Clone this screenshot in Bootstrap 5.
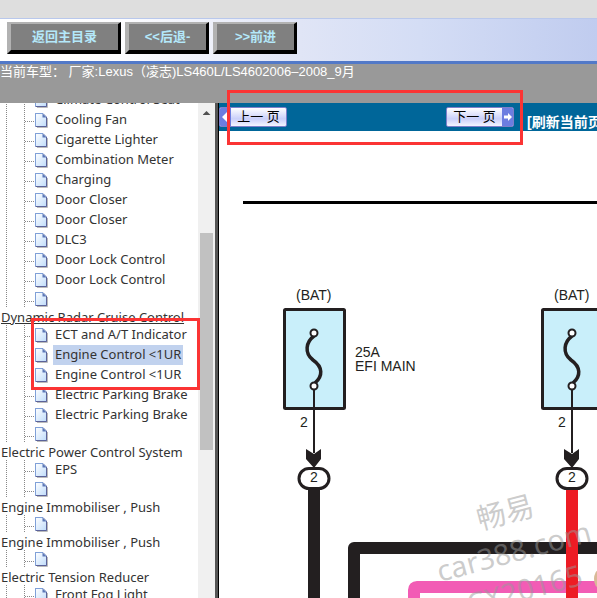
<!DOCTYPE html>
<html lang="zh-CN">
<head>
<meta charset="utf-8">
<meta name="viewport" content="width=device-width, initial-scale=1">
<title>Lexus LS460L/LS460</title>
<link href="https://cdn.jsdelivr.net/npm/bootstrap@5.3.0/dist/css/bootstrap.min.css" rel="stylesheet">
<style>
body{font-family:"Liberation Sans","Noto Sans CJK SC",sans-serif;font-size:13px;line-height:16px;color:#333}
.strip{height:18px;background:#dedede}
.toolbar{height:46px;padding:3px 7px 0;border-top:1px solid #b9c8ec;border-bottom:3px solid #5279c8;background:linear-gradient(90deg,#fff 0,#fdfdff 120px,#e0e5f6 300px,#d4ddf5 420px,#c0ccef 597px)}
.tool-btn{height:32px;width:84px;padding:0;background:#808080;border:solid;border-width:2px 3px 4px 4px;border-color:#b2b2b2 #000 #000 #b2b2b2;color:#b4e8fa;font-weight:700;font-size:13px;line-height:16px;white-space:nowrap}
.tool-btn.wide{width:114px}
.model-bar{height:39px;background:#999;color:#fff}
.side{width:219px;border-right:1px solid #000}
.side-edge{width:3px;background:#555}
.tree{font-family:"Noto Sans","Noto Sans CJK SC",sans-serif;font-size:13px;margin:-13px 0 0;padding:0}
.tree a{color:inherit;text-decoration:none;white-space:nowrap}
.leaf{height:20px;padding-left:35px;background:
 repeating-linear-gradient(180deg,#888 0 1px,transparent 1px 2px) 6px 0/1px 100% no-repeat,
 repeating-linear-gradient(180deg,#888 0 1px,transparent 1px 2px) 24px 0/1px 100% no-repeat,
 repeating-linear-gradient(90deg,#888 0 1px,transparent 1px 2px) 25px 11px/10px 1px no-repeat}
.leaf.blank{height:18px}
.leaf svg{width:13px;height:15px;margin-top:3px;flex:none}
.leaf.blank svg{margin-top:2px}
.leaf a{margin-left:5px;padding:0 2px;line-height:18px}
.leaf a.current{background:#c1d2ee}
.branch{height:17px;line-height:18px;padding-left:1px}
.branch a.hovered{text-decoration:underline}
.scroll{width:17px;background:#f0f0f0}
.thumb{width:13px;height:217px;margin-top:118px;background:#c1c1c1}
.arrow{width:8px;height:4px;margin-top:8px;background:#505050;clip-path:polygon(50% 0,100% 100%,0 100%)}
.pager{height:28px;background:#069}
.page-btn{width:68px;height:20px;padding:0;border:1px solid #7d7fc9;border-radius:2px;background:linear-gradient(#fff,#c9cffa 60%,#f4f5ff);color:#000;font-size:13px;line-height:18px;white-space:nowrap;overflow:hidden}
.page-btn svg{width:11px;height:18px;background:#6c7de0;flex:none}
.page-btn span{flex:1}
.next-btn{margin-left:159px}
.refresh{color:#fff;font-weight:700;font-size:14px;text-decoration:none;margin-left:13px;padding-top:7px;white-space:nowrap}
.callout{border:3px solid #fb3434;pointer-events:none}
.c-pager{left:227px;top:90px;width:296px;height:55px}
.c-tree{left:31px;top:318px;width:169px;height:72px}
.wiring text{font-family:"Liberation Sans",sans-serif;font-size:14px;fill:#231f20}
.wiring .wm text{font-family:"Noto Sans","Noto Sans CJK SC",sans-serif;font-size:29px;fill:#999;fill-opacity:.5}
</style>
<script src="https://cdn.jsdelivr.net/npm/bootstrap@5.3.0/dist/js/bootstrap.bundle.min.js"></script>
</head>
<body class="vh-100 d-flex flex-column overflow-hidden position-relative bg-white">
<svg class="position-absolute" width="0" height="0" aria-hidden="true">
 <defs>
  <linearGradient id="paper" x1="0" y1="0" x2="1" y2="1"><stop offset="0" stop-color="#fff"/><stop offset="1" stop-color="#bfdcfb"/></linearGradient>
 </defs>
 <symbol id="page" viewBox="0 0 13 15">
  <path d="M2 14.500h10.500V5" fill="none" stroke="#bbb"/>
  <path d="M.5 .5h7.500l3.500 3.500v9.500H.5z" fill="url(#paper)" stroke="#7585b8"/>
  <path d="M.5 13V.5H8" fill="none" stroke="#7fa0d8"/>
  <path d="M11.500 4v9.500H1" fill="none" stroke="#5b639a"/>
  <path d="M7.500 .5v4h4z" fill="#5d79b8"/>
 </symbol>
</svg>

<div class="strip flex-shrink-0"></div>
<header class="toolbar d-flex gap-1 flex-shrink-0">
 <button type="button" class="tool-btn wide">返回主目录</button>
 <button type="button" class="tool-btn">&lt;&lt;后退-</button>
 <button type="button" class="tool-btn">&gt;&gt;前进</button>
</header>
<div class="model-bar flex-shrink-0 text-nowrap">当前车型： 厂家:Lexus（凌志)LS460L/LS4602006–2008_9月</div>

<main class="d-flex flex-grow-1 overflow-hidden">
 <nav class="side d-flex flex-shrink-0 overflow-hidden" aria-label="目录">
  <ul class="tree list-unstyled flex-grow-1">
   <li class="leaf d-flex"><svg><use href="#page"/></svg><a href="#">Climate Control Seat</a></li>
   <li class="leaf d-flex"><svg><use href="#page"/></svg><a href="#">Cooling Fan</a></li>
   <li class="leaf d-flex"><svg><use href="#page"/></svg><a href="#">Cigarette Lighter</a></li>
   <li class="leaf d-flex"><svg><use href="#page"/></svg><a href="#">Combination Meter</a></li>
   <li class="leaf d-flex"><svg><use href="#page"/></svg><a href="#">Charging</a></li>
   <li class="leaf d-flex"><svg><use href="#page"/></svg><a href="#">Door Closer</a></li>
   <li class="leaf d-flex"><svg><use href="#page"/></svg><a href="#">Door Closer</a></li>
   <li class="leaf d-flex"><svg><use href="#page"/></svg><a href="#">DLC3</a></li>
   <li class="leaf d-flex"><svg><use href="#page"/></svg><a href="#">Door Lock Control</a></li>
   <li class="leaf d-flex"><svg><use href="#page"/></svg><a href="#">Door Lock Control</a></li>
   <li class="leaf blank d-flex"><svg><use href="#page"/></svg></li>
   <li class="branch"><a href="#" class="hovered">Dynamic Radar Cruise Control</a></li>
   <li class="leaf d-flex"><svg><use href="#page"/></svg><a href="#">ECT and A/T Indicator</a></li>
   <li class="leaf d-flex"><svg><use href="#page"/></svg><a href="#" class="current">Engine Control &lt;1UR</a></li>
   <li class="leaf d-flex"><svg><use href="#page"/></svg><a href="#">Engine Control &lt;1UR</a></li>
   <li class="leaf d-flex"><svg><use href="#page"/></svg><a href="#">Electric Parking Brake</a></li>
   <li class="leaf d-flex"><svg><use href="#page"/></svg><a href="#">Electric Parking Brake</a></li>
   <li class="leaf blank d-flex"><svg><use href="#page"/></svg></li>
   <li class="branch"><a href="#">Electric Power Control System</a></li>
   <li class="leaf d-flex"><svg><use href="#page"/></svg><a href="#">EPS</a></li>
   <li class="leaf blank d-flex"><svg><use href="#page"/></svg></li>
   <li class="branch"><a href="#">Engine Immobiliser , Push</a></li>
   <li class="leaf blank d-flex"><svg><use href="#page"/></svg></li>
   <li class="branch"><a href="#">Engine Immobiliser , Push</a></li>
   <li class="leaf blank d-flex"><svg><use href="#page"/></svg></li>
   <li class="branch"><a href="#">Electric Tension Reducer</a></li>
   <li class="leaf d-flex"><svg><use href="#page"/></svg><a href="#">Front Fog Light</a></li>
  </ul>
  <div class="scroll flex-shrink-0 d-flex flex-column align-items-center"><div class="arrow"></div><div class="thumb"></div></div>
  <div class="side-edge flex-shrink-0"></div>
 </nav>

 <section class="flex-grow-1 d-flex flex-column overflow-hidden">
  <div class="pager d-flex flex-shrink-0 pt-1">
   <button type="button" class="page-btn flex-shrink-0 d-flex"><svg viewBox="0 0 11 18"><path d="M2 9l5-5v3h2v4H7v3z" fill="#fff"/></svg><span>上一 页</span></button>
   <button type="button" class="page-btn next-btn flex-shrink-0 d-flex"><span>下一 页</span><svg viewBox="0 0 11 18"><path d="M10 9L6 5v2.500H2v3h4V13z" fill="#fff"/></svg></button>
   <a href="#" class="refresh">[刷新当前页]</a>
  </div>
  <svg class="wiring flex-grow-1 w-100" role="img" aria-label="EFI MAIN">
   <defs>
    <g id="fuse">
     <rect x="-29.500" y="178.500" width="60" height="99" rx="1" fill="#c9effa" stroke="#231f20" stroke-width="3"/>
     <path d="M0 205C-8 211-10 222-1 229C9 236 9 245 1 252" fill="none" stroke="#231f20" stroke-width="3.500"/>
     <path d="M0 256V322" stroke="#231f20" stroke-width="2"/>
     <circle cy="202" r="3.500" fill="#fff" stroke="#231f20" stroke-width="2"/>
     <circle cy="255" r="3.500" fill="#fff" stroke="#231f20" stroke-width="2"/>
     <path d="M-8 318l8 5 7-5v10l-7 9-8-9z" fill="#231f20"/>
    </g>
    <rect id="pin" x="-15" y="337.500" width="30" height="20" rx="10" fill="#fff" stroke="#231f20" stroke-width="3"/>
   </defs>
   <path d="M24 71.500H2000" stroke="#000" stroke-width="3"/>
   <g transform="translate(95 0)"><use href="#fuse"/><path d="M0 358V2000" stroke="#231f20" stroke-width="12"/><use href="#pin"/></g>
   <path d="M135 2000V417H2000" fill="none" stroke="#231f20" stroke-width="12" stroke-linejoin="round"/>
   <path d="M195 2000V459Q195 456 198 456H2000" fill="none" stroke="#f25cb5" stroke-width="12"/>
   <g transform="translate(353 0)"><use href="#fuse"/><path d="M0 358V2000" stroke="#ed1c24" stroke-width="12"/><use href="#pin"/></g>
   <ellipse cx="380" cy="448" rx="5" ry="9" fill="#d8b997"/>
   <text x="77" y="169">(BAT)</text><text x="335" y="169">(BAT)</text>
   <text x="136" y="226">25A</text><text x="136" y="240">EFI MAIN</text>
   <text x="81" y="296">2</text><text x="339" y="296">2</text>
   <text x="91" y="351">2</text><text x="349" y="351">2</text>
   <g class="wm">
    <text transform="translate(261 399) rotate(-15)">畅易</text>
    <text transform="translate(221 451) rotate(-15)">car388.com</text>
    <text transform="translate(251 484) rotate(-15)">CX20165</text>
   </g>
  </svg>
 </section>
</main>
<div class="callout c-pager position-absolute"></div>
<div class="callout c-tree position-absolute"></div>
</body>
</html>
